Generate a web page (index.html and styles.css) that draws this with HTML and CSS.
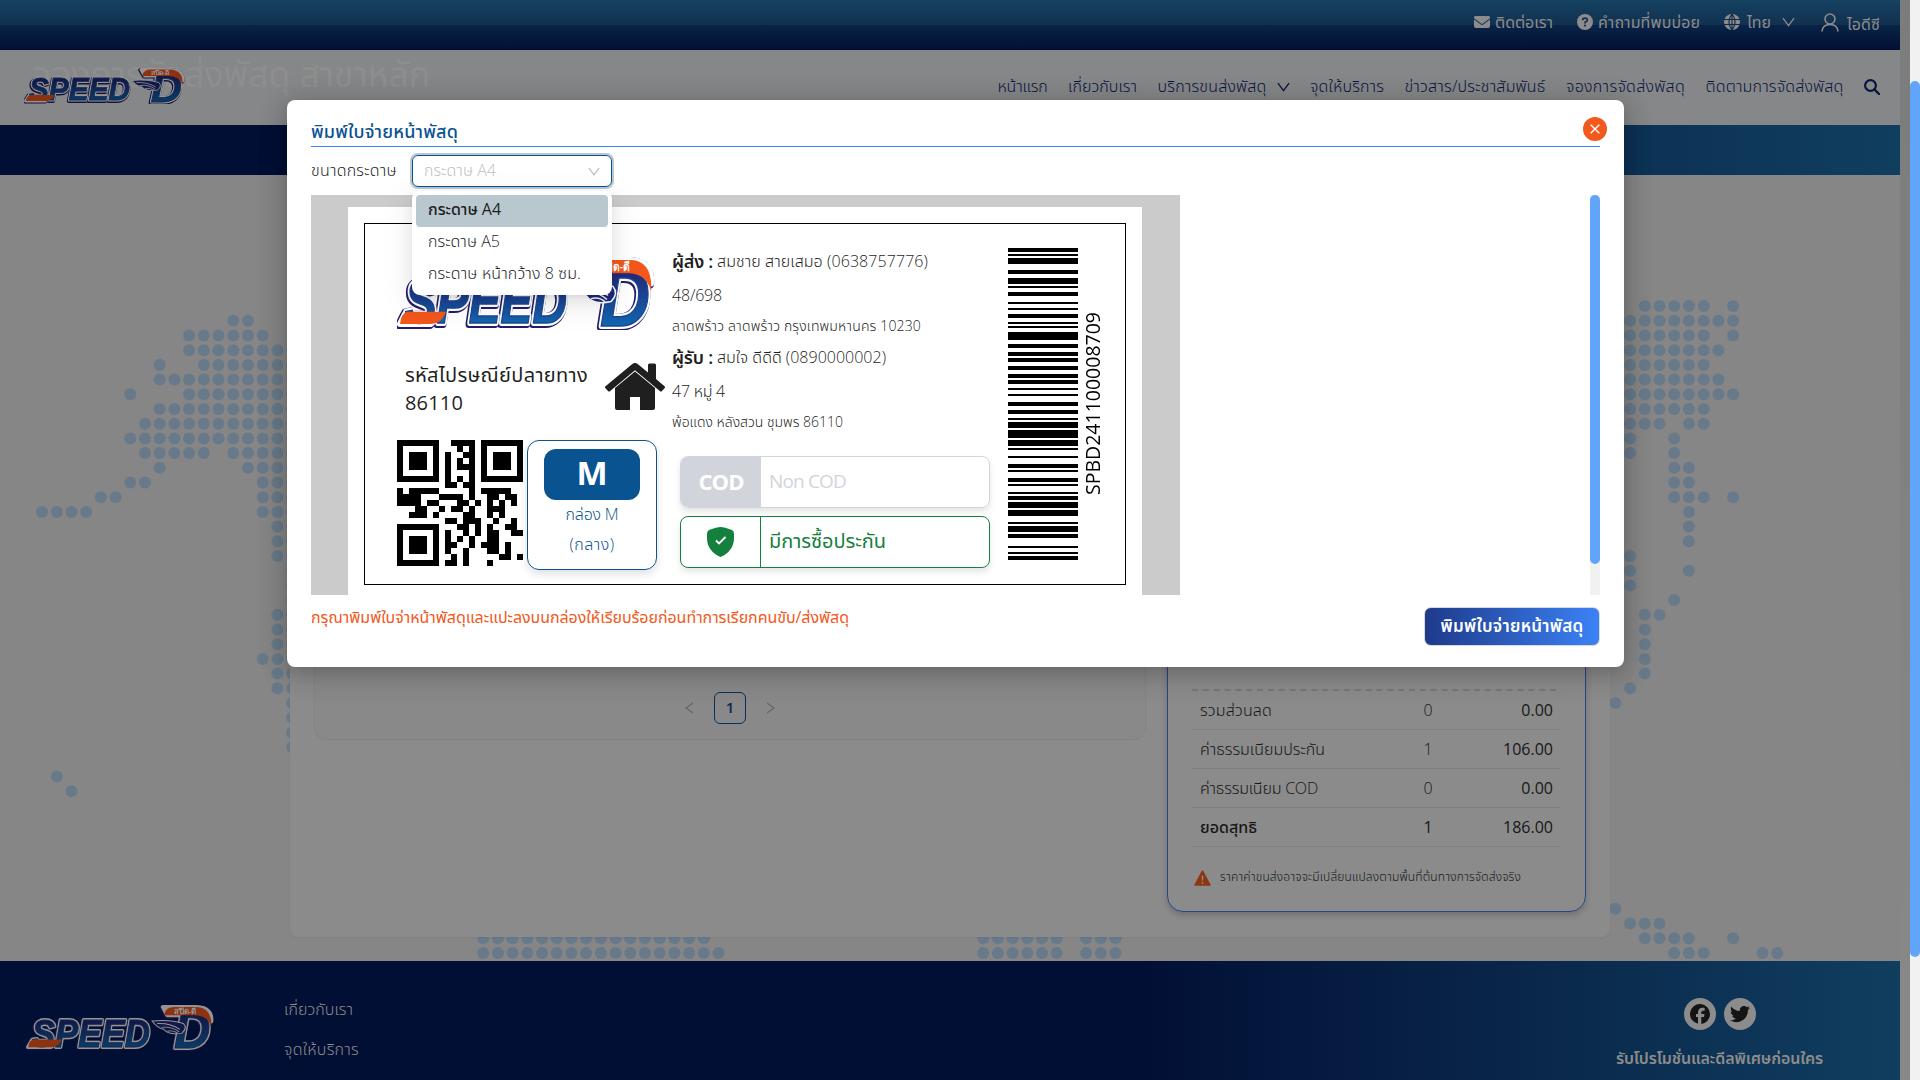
FILE: index.html
```html
<!DOCTYPE html>
<html lang="th">
<head>
<meta charset="utf-8">
<title>SPEED-D</title>
<link rel="stylesheet" href="styles.css">
</head>
<body>
<svg class="defs" aria-hidden="true">
  <defs>
    <linearGradient id="letters" x1="0" y1="0" x2="0" y2="1"><stop offset="0.25" stop-color="#1f2a7c"/><stop offset="0.95" stop-color="#0f74bd"/></linearGradient>
    <symbol id="logo" viewBox="0 0 258 72" preserveAspectRatio="none">
      <g class="logo-word">
        <g class="logo-edge"><text x="8" y="65" textLength="162" lengthAdjust="spacingAndGlyphs">SPEED</text><text class="logo-d" x="203" y="68" textLength="50" lengthAdjust="spacingAndGlyphs">D</text><path d="M8 56H44L34 66H3ZM188 3H234Q256 4 254 26L244 22Q240 16 230 16H194Z"/></g>
        <g class="logo-rim"><text x="8" y="65" textLength="162" lengthAdjust="spacingAndGlyphs">SPEED</text><text class="logo-d" x="203" y="68" textLength="50" lengthAdjust="spacingAndGlyphs">D</text><path d="M8 56H44L34 66H3ZM188 3H234Q256 4 254 26L244 22Q240 16 230 16H194Z"/></g>
        <g class="logo-fill"><text x="8" y="65" textLength="162" lengthAdjust="spacingAndGlyphs">SPEED</text><text class="logo-d" x="203" y="68" textLength="50" lengthAdjust="spacingAndGlyphs">D</text></g>
      </g>
      <path fill="#f2571b" d="M10 54H49Q45 66 34 66H3Q4 56 10 54ZM190 14Q192 3 203 3H234Q256 4 254 34Q250 17 232 16H190Z"/>
      <path fill="#1f2a7c" stroke="#fff" stroke-width="1.5" d="M173 25Q198 22 216 29Q222 36 214 44Q196 48 189 38Q180 36 173 25Z"/>
      <path fill="none" stroke="#fff" stroke-width="1.4" d="M180 29Q198 28 211 38M186 35Q200 33 210 42M194 41Q202 39 208 44"/>
      <text class="logo-tag" x="203" y="14" textLength="30" lengthAdjust="spacingAndGlyphs">สปีด-ดี</text>
    </symbol>
    <symbol id="chev" viewBox="0 0 14 10"><path d="M1 .8 7 9 13 .8" fill="none" stroke="currentColor" stroke-width="1.4"/></symbol>
  </defs>
</svg>
<div class="app">
  <div class="page">
    <div class="topbar">
      <a class="tlink"><svg width="16" height="12" viewBox="0 0 16 12"><path fill="currentColor" d="M1.5 0h13A1.5 1.5 0 0 1 15.4 2.7L8.6 7.8a1 1 0 0 1-1.2 0L.6 2.7A1.5 1.5 0 0 1 1.5 0ZM0 3.5l6.8 5.1a2 2 0 0 0 2.4 0L16 3.500V10a2 2 0 0 1-2 2H2a2 2 0 0 1-2-2Z"/></svg><span data-w="58">ติดต่อเรา</span></a>
      <a class="tlink gap-24"><svg width="16" height="16" viewBox="0 0 16 16"><circle cx="8" cy="8" r="8" fill="currentColor"/><path d="M5.600 6.200Q5.700 4.200 8 4.200T10.400 6.200Q10.400 7.300 8 8.300V9.400" fill="none" stroke="#10304f" stroke-width="1.700"/><circle cx="8" cy="11.600" r="1.100" fill="#10304f"/></svg><span data-w="102">คำถามที่พบบ่อย</span></a>
      <a class="tlink gap-24 g7"><svg width="16" height="16" viewBox="0 0 16 16"><circle cx="8" cy="8" r="8" fill="currentColor"/><path d="M0 5.500H16M0 10.500H16M8 0V16M8 0Q1.800 8 8 16M8 0Q14.200 8 8 16" fill="none" stroke="#0d2a4b" stroke-width="1.100"/></svg><span data-w="24">ไทย</span></a>
      <svg class="gap-11" width="13" height="10"><use href="#chev"/></svg>
      <a class="tlink user"><svg width="18" height="19" viewBox="0 0 18 19"><g fill="none" stroke="currentColor" stroke-width="1.600"><circle cx="9" cy="6" r="5"/><path d="M1 18.500Q1.500 11.500 9 11.500T17 18.500"/></g></svg><span class="low" data-w="33">ไอดีซี</span></a>
    </div>
    <div class="nav">
      <span class="hero" data-w="398">จองการจัดส่งพัสดุ สาขาหลัก</span>
      <svg class="logo logo-nav"><use href="#logo"/></svg>
      <nav class="menu">
        <a data-w="50">หน้าแรก</a><a data-w="69">เกี่ยวกับเรา</a><span class="sub"><a data-w="109">บริการขนส่งพัสดุ</a><svg width="13" height="10"><use href="#chev"/></svg></span><a data-w="74">จุดให้บริการ</a><a data-w="141">ข่าวสาร/ประชาสัมพันธ์</a><a data-w="119">จองการจัดส่งพัสดุ</a><a data-w="138">ติดตามการจัดส่งพัสดุ</a><svg width="16" height="16" viewBox="0 0 16 16"><circle cx="6.500" cy="6.500" r="5.400" fill="none" stroke="currentColor" stroke-width="2.200"/><path d="M10.500 10.500 15 15" stroke="currentColor" stroke-width="2.400" stroke-linecap="round"/></svg>
      </nav>
    </div>
    <div class="band"></div>
    <main class="content">
      <svg class="map" id="map"></svg>
      <section class="sheet">
        <div class="list">
          <div class="pager"><svg width="9" height="12" viewBox="0 0 9 12"><path d="M8 1 1 6 8 11" fill="none" stroke="#666" stroke-width="1.200"/></svg><span class="current">1</span><svg width="9" height="12" viewBox="0 0 9 12"><path d="M1 1 8 6 1 11" fill="none" stroke="#666" stroke-width="1.200"/></svg></div>
        </div>
        <div class="summary">
          <svg class="dash" width="369" height="2"><path d="M0 1H369" stroke="#777" stroke-width="2" stroke-dasharray="6 4.850"/></svg>
          <div class="row"><span><b data-w="72">รวมส่วนลด</b></span><i>0</i><em>0.00</em></div>
          <div class="row"><span><b data-w="125">ค่าธรรมเนียมประกัน</b></span><i>1</i><em>106.00</em></div>
          <div class="row"><span><b data-w="118">ค่าธรรมเนียม COD</b></span><i>0</i><em>0.00</em></div>
          <div class="row total"><span><b data-w="57">ยอดสุทธิ</b></span><i>1</i><em>186.00</em></div>
          <div class="note"><svg width="17" height="16" viewBox="0 0 17 16"><path d="M8.500 1 16 15H1Z" fill="#8d3610" stroke="#8d3610" stroke-width="1.500" stroke-linejoin="round"/><path d="M8.500 5.500v5M8.500 12v1.800" stroke="#8c8c8c" stroke-width="1.500"/></svg><span data-w="301">ราคาค่าขนส่งอาจจะมีเปลี่ยนแปลงตามพื้นที่ต้นทางการจัดส่งจริง</span></div>
        </div>
      </section>
    </main>
    <footer class="footer">
      <svg class="logo logo-foot"><use href="#logo"/></svg>
      <div class="flinks"><a data-w="69">เกี่ยวกับเรา</a><a data-w="75">จุดให้บริการ</a></div>
      <div class="social">
        <div class="icons">
          <span><svg width="20" height="20" viewBox="0 0 20 20"><path fill="#141414" d="M20 10a10 10 0 1 0-12 9.800V13H6V10h2V8.500c0-3.300 1.500-4.800 4.700-4.800.6 0 1.600.1 2 .2v2.800h-1.200c-1.600 0-2.200.6-2.200 2.200V10h3.200l-.55 3h-2.650v7A10 10 0 0 0 20 10Z"/></svg></span>
          <span><svg width="20" height="20" viewBox="0 0 512 512"><path fill="#141414" d="M459 152c.3 4.500.3 9.100.3 13.600C459.300 304 354 464 161.100 464 101.700 464 46.800 446.800 0 417c8.400 1 16.600 1.300 25.300 1.300 48.700 0 93.900-16.600 130.300-44.800-46.100-1-84.800-31.200-98.100-72.800 6.500 1 13 1.600 19.800 1.600 9.400 0 18.800-1.300 27.600-3.600C56.900 289 20.800 246.800 20.800 195.600v-1.300c13.900 7.800 30.200 12.700 47.400 13.300-28.300-18.800-46.800-51-46.800-87.400 0-19.500 5.200-37.400 14.300-53C87.400 131 165 172.900 252.100 177.400c-1.600-7.800-2.600-15.900-2.600-24C249.500 95.100 296.600 48 354.800 48c30.200 0 57.500 12.700 76.700 33.100 23.700-4.500 46.500-13.300 66.600-25.300-7.800 24.400-24.400 44.800-46.100 57.800 21.100-2.300 41.600-8.100 60.400-16.200-14.300 20.800-32.200 39.300-52.600 54.300Z"/></svg></span>
        </div>
        <strong data-w="207">รับโปรโมชั่นและดีลพิเศษก่อนใคร</strong>
      </div>
    </footer>
  </div>
  <div class="gutter"></div>
  <div class="vscroll"><div class="thumb"></div></div>
</div>

<div class="modal">
  <button class="close"><svg width="10" height="10" viewBox="0 0 10 10"><path d="M.7.700 9.300 9.300M9.300.700.700 9.300" stroke="#fff" stroke-width="1.400"/></svg></button>
  <h2 class="title"><span data-w="147">พิมพ์ใบจ่ายหน้าพัสดุ</span></h2>
  <div class="field">
    <label data-w="86">ขนาดกระดาษ</label>
    <div class="select"><span data-w="72">กระดาษ A4</span><svg width="12" height="9"><use href="#chev"/></svg>
      <ul class="options">
        <li class="active"><span data-w="73">กระดาษ A4</span></li>
        <li><span data-w="72">กระดาษ A5</span></li>
        <li><span data-w="153">กระดาษ หน้ากว้าง 8 ซม.</span></li>
      </ul>
    </div>
  </div>
  <div class="viewer">
    <div class="desk"><div class="paper"><div class="label">
      <div class="left">
        <svg class="logo logo-label"><use href="#logo"/></svg>
        <div class="dest"><div class="zip"><div><span data-w="183">รหัสไปรษณีย์ปลายทาง</span></div><div><span data-w="58">86110</span></div></div>
          <svg width="60" height="48" viewBox="0 0 60 48"><g fill="#1f1f1f"><path d="M30 8.500 50 25V45q0 2-2 2H35V34H25V47H12q-2 0-2-2V25Z"/><path d="M30 0q1.500 0 3 1.300L43 9.500V2q0-1.500 1.500-1.500H49.500Q51 .5 51 2V16L59.500 23.200q1 1 0 2L57 28q-1 1-2.200 0L30 7.300 5.200 28Q4 29 3 28L.5 25.200q-1-1 0-2L27 1.300Q28.500 0 30 0Z"/></g></svg></div>
        <div class="codes"><svg id="qr" width="126" height="126" viewBox="0 0 21 21" shape-rendering="crispEdges"></svg>
          <div class="size"><div class="badge">M</div><div><span data-w="53">กล่อง M</span></div><div><span data-w="45">(กลาง)</span></div></div></div>
      </div>
      <div class="right">
        <div class="addr">
          <p><b data-w="41">ผู้ส่ง :</b><span data-w="211">สมชาย สายเสมอ (0638757776)</span></p>
          <p class="l2"><span data-w="50">48/698</span></p>
          <p class="sm"><span data-w="249">ลาดพร้าว ลาดพร้าว กรุงเทพมหานคร 10230</span></p>
          <p><b data-w="41">ผู้รับ :</b><span data-w="169">สมใจ ดีดีดี (0890000002)</span></p>
          <p class="l2"><span data-w="53">47 หมู่ 4</span></p>
          <p class="sm"><span data-w="171">พ้อแดง หลังสวน ชุมพร 86110</span></p>
        </div>
        <div class="pill cod"><b><span data-w="45">COD</span></b><span data-w="77">Non COD</span></div>
        <div class="pill ins"><b><svg width="27" height="30" viewBox="0 0 27 30"><path fill="#15803d" d="M13.500 0Q17 0 25 3 27 4 27 7V11Q27 24 13.500 30 0 24 0 11V7Q0 4 2 3 10 0 13.500 0Z"/><path d="M9 13.500 12 16.500 18.500 10" fill="none" stroke="#fff" stroke-width="1.800"/></svg></b><span data-w="117">มีการซื้อประกัน</span></div>
      </div>
      <svg id="bars" width="70" height="312" viewBox="0 0 70 156" preserveAspectRatio="none" shape-rendering="crispEdges"></svg>
      <div class="serial"><span>SPBD241100008709</span></div>
    </div></div></div>
    <div class="rail"><div class="thumb"></div></div>
  </div>
  <div class="foot"><p><span data-w="538">กรุณาพิมพ์ใบจ่าหน้าพัสดุและแปะลงบนกล่องให้เรียบร้อยก่อนทำการเรียกคนขับ/ส่งพัสดุ</span></p><button class="print"><span data-w="143">พิมพ์ใบจ่ายหน้าพัสดุ</span></button></div>
</div>
<script src="script.js"></script>
</body>
</html>
```
FILE: styles.css
```css
* { box-sizing: border-box; }
body { margin: 0; width: 1920px; height: 1080px; overflow: hidden; position: relative; font: 340 16px/24px "Open Sans", "Noto Sans Thai", sans-serif; color: #1f1f1f; }
h2, p, ul { margin: 0; padding: 0; }
ul { list-style: none; }
button { border: 0; padding: 0; font: inherit; }
svg { flex: none; display: block; }
[data-w] { white-space: nowrap; display: inline-block; position: relative; top: -1px; }
.defs { position: absolute; width: 0; height: 0; }

.logo-word { font: italic 900 62px "Liberation Sans", sans-serif; }
.logo-word .logo-d { font-size: 82px; }
.logo-edge { fill: #241d6b; stroke: #241d6b; stroke-width: 8; stroke-linejoin: round; transform: translate(-1px, 1px); }
.logo-rim { fill: #fff; stroke: #fff; stroke-width: 6; stroke-linejoin: round; }
.logo-fill { fill: url(#letters); stroke: #1c4690; stroke-width: 1.5; }
.logo-tag { font: 600 12px "Open Sans", sans-serif; fill: #fff; }

.app { display: flex; height: 1080px; }
.page { width: 1900px; display: flex; flex-direction: column; background: #868686; }
.gutter { width: 10px; background: linear-gradient(#7b7d7c, #7d807f 30%, #858684 70%, #888); }
.vscroll { width: 10px; background: #f1f1f1; padding-top: 81px; }
.thumb { background: #60a5fa; border-radius: 5px; }
.vscroll .thumb { height: 876px; }

.topbar { height: 50px; flex: none; padding: 0 20px 6px 0; display: flex; align-items: center; justify-content: flex-end; color: #8c8c8c; background: linear-gradient(#154261, #12304f 50%, #082447 50%, #030f34); }
.tlink { display: flex; align-items: center; gap: 5px; }
.topbar [data-w] { top: 0; font-weight: 400; }
.gap-24 { margin-left: 24px; }
.g7 { gap: 7px; }
.gap-11 { margin-left: 11px; }
.user { margin-left: 26px; gap: 8px; }
.topbar .low { top: 2px; }
.nav { height: 75px; flex: none; position: relative; display: flex; align-items: center; justify-content: space-between; padding: 0 20px 2px 24px; background: #868788; }
.nav .hero { position: absolute; left: 32px; top: -3px; font-size: 36px; line-height: 54px; font-weight: 400; color: #8e8e8f; }
.logo-nav { width: 161px; height: 36px; position: relative; top: -1px; filter: brightness(.58); }
.menu { display: flex; align-items: center; gap: 20.500px; color: #08153f; }
.sub { display: flex; align-items: center; gap: 10px; }
.band { height: 50px; flex: none; background: linear-gradient(90deg, #020f35 45%, #103e5f); }
.content { height: 786px; flex: none; position: relative; padding-left: 290px; }
.map { position: absolute; left: 0; top: 0; width: 1900px; height: 786px; }
.sheet { position: relative; width: 1320px; height: 762px; background: #8b8b8b; border-radius: 0 0 8px 8px; display: flex; padding-left: 24px; gap: 21px; box-shadow: 0 1px 2px rgba(0,0,0,.05); }
.list { width: 832px; height: 565px; border: 1px solid #838383; border-radius: 0 0 12px 12px; background: #898989; display: flex; flex-direction: column; justify-content: flex-end; padding-bottom: 15px; }
.pager { display: flex; justify-content: center; align-items: center; gap: 20px; }
.current { width: 32px; height: 32px; border: 1px solid #07305a; border-radius: 6px; line-height: 28px; text-align: center; font-weight: 600; color: #06294c; font-size: 15px; }
.summary { width: 419px; height: 737px; border: 1px solid #23488a; border-radius: 0 0 16px 16px; padding: 513px 24px 0; box-shadow: 0 3px 6px rgba(0,0,0,.2); }
.row { height: 39px; border-bottom: 1px solid #808080; display: grid; grid-template-columns: 203px 50px 1fr; align-items: center; padding: 0 8px; color: #171717; }
.row b { font-weight: 340; top: 0; }
.row i, .row em { font-style: normal; text-align: center; }
.row em { text-align: right; font-weight: 500; }
.row.total, .row.total b { font-weight: 500; }
.note { display: flex; align-items: center; gap: 9px; padding-left: 2px; margin-top: 19px; font-size: 12px; color: #171717; }
.footer { flex: 1; display: flex; padding-left: 26px; background: linear-gradient(90deg, #020f35 60%, #103e5f); color: #8c8c8c; }
.logo-foot { width: 188px; height: 46px; margin-top: 44px; filter: brightness(.58); }
.flinks { margin-left: 70px; width: 1200px; padding-top: 37px; display: flex; flex-direction: column; gap: 16px; align-items: flex-start; }
.social { margin-left: auto; padding: 37px 77px 0 0; display: flex; flex-direction: column; align-items: center; }
.icons { display: flex; gap: 8px; margin-bottom: 16px; }
.icons span { width: 32px; height: 32px; border-radius: 50%; background: #8c8c8c; display: grid; place-items: center; }
.social strong { font-weight: 600; top: 0; }

.modal { position: absolute; left: 287px; top: 100px; width: 1337px; height: 567px; background: #fff; border-radius: 8px; padding: 19px 24px 0; box-shadow: 0 6px 16px rgba(0,0,0,.08), 0 9px 28px 8px rgba(0,0,0,.05), 0 3px 30px rgba(0,0,0,.18); }
.close { position: absolute; right: 17px; top: 17px; width: 24px; height: 24px; border-radius: 50%; background: #f2591d; display: grid; place-items: center; }
.title { height: 28px; width: 1289px; border-bottom: 1px solid #3b82f6; font-size: 18px; line-height: 26px; font-weight: 500; color: #0a5391; }
.field { display: flex; align-items: center; height: 48px; gap: 15px; }
.select { position: relative; width: 200px; height: 32px; border: 1px solid #0a5391; border-radius: 6px; box-shadow: 0 0 0 2px #b9c8cf; display: flex; align-items: center; justify-content: space-between; padding: 0 11px; color: #bfbfbf; }
.options { position: absolute; z-index: 2; left: -1px; top: 35px; width: 200px; padding: 4px; background: #fff; border-radius: 8px; color: #1f1f1f; box-shadow: 0 6px 16px rgba(0,0,0,.08), 0 3px 6px -4px rgba(0,0,0,.12), 0 9px 28px 8px rgba(0,0,0,.05); }
.options li { height: 32px; padding: 0 12px; line-height: 30px; border-radius: 4px; }
.options .active { background: #b9c8cf; font-weight: 500; }
.viewer { height: 400px; width: 1289px; display: flex; justify-content: space-between; }
.desk { width: 869px; background: #cbcbcb; padding: 12px 38px 0 37px; }
.paper { height: 388px; background: #fff; padding: 16px 16px 0; }
.label { height: 362px; border: 1px solid #000; display: flex; padding-left: 32px; }
.rail { width: 10px; background: #f1f1f1; }
.rail .thumb { height: 369px; }
.left { width: 260px; padding-top: 33px; }
.logo-label { width: 258px; height: 73px; }
.dest { margin-top: 29px; display: flex; justify-content: space-between; align-items: center; width: 268px; padding-left: 8px; }
.zip { font-size: 20px; line-height: 28px; font-weight: 400; position: relative; top: 3px; }
.codes { margin-top: 25px; display: flex; gap: 4px; }
.size { width: 130px; height: 130px; border: 1px solid #0a5391; border-radius: 12px; padding-top: 8px; text-align: center; line-height: 30px; color: #0a5391; box-shadow: 0 4px 8px rgba(0,0,0,.12); }
.badge { width: 96px; height: 51px; margin: 0 auto 0 16px; border-radius: 12px; background: #0a5391; color: #fff; font-size: 33px; font-weight: 700; line-height: 48px; }
.right { margin-left: 16px; width: 317px; padding-top: 22px; }
.addr p { height: 33px; line-height: 33px; display: flex; gap: 4px; }
.addr b { font-size: 18px; font-weight: 600; left: -1px; }
.addr .l2 { height: 34px; line-height: 34px; }
.addr .sm { height: 29px; line-height: 27px; font-size: 14px; }
.addr span { left: -1px; }
.addr { height: 210px; }
.pill { margin-left: 7px; width: 310px; height: 52px; border: 1px solid #d1d5db; border-radius: 8px; overflow: hidden; display: flex; align-items: center; font-size: 19px; font-weight: 400; color: #d1d5db; box-shadow: 0 4px 6px rgba(0,0,0,.1); }
.pill b { width: 80px; height: 52px; display: grid; place-items: center; margin-right: 8px; flex: none; }
.cod b { background: #d1d5db; color: #fff; font-size: 22px; font-weight: 700; }
.ins { margin-top: 8px; border-color: #15803d; color: #15803d; font-size: 20px; }
.ins b { border-right: 1px solid #15803d; }
#bars { margin: 24px 0 0 18px; }
.serial { width: 30px; height: 183px; margin: 88px 0 0; display: flex; align-items: center; }
.serial span { writing-mode: vertical-rl; transform: rotate(180deg); font: 400 19.5px/30px "Open Sans", sans-serif; color: #000; }
.foot { display: flex; justify-content: space-between; padding-top: 12px; width: 1289px; }
.foot p { color: #f2591d; line-height: 22px; font-weight: 400; }
.print { width: 176px; height: 39px; border: 1px solid #d9d9d9; border-radius: 7px; background: linear-gradient(90deg, #1e3a8a, #3b82f6); color: #fff; font-size: 17px; font-weight: 600; line-height: 34px; }
```
FILE: script.js
```js
// Each entry: row number, then column ranges of the dotted world map.
const dots = {
  '-1': '109-113,115', 0: '13-14,108-115', 1: '10-15,108-113,115', 2: '10-17,108-114', 3: '8,11-17,108-113',
  4: '8-17,108-114', 5: '6,10-17,108-115', 6: '8-17,108-113', 7: '7-17,108-110,112-113', 8: '6-17,108,111',
  9: '7-11,13-17,108,111', 10: '8,14-17,111-112', 11: '6-7,15-17,111-112', 12: '4-5,15-17,111-113,115',
  13: '0-3,15-17,112', 14: '16-17,112', 15: '16-17,112', 16: '16-17,108', 17: '17,108,112', 18: '17,108', 19: '17,111',
  20: '16-17,109-110', 21: '16-17,109', 22: '16-17,109', 23: '15-17,109', 24: '16-17,109', 25: '16-17,108',
  26: '17,107', 27: '17', 28: '17', 29: '17', 31: '1', 32: '2', 40: '107', 41: '108-110',
  42: '30-45,64-69,71-73,109-112,115', 43: '30-46,64-69,71-73,111-113,117-118'
};
let dotMarkup = '';
for (const row in dots) {
  for (const part of dots[row].split(',')) {
    const [a, b = a] = part.split('-').map(Number);
    for (let c = a; c <= b; c++) {
      dotMarkup += `<circle cx="${(42.1 + c * 14.704).toFixed(1)}" cy="${(145.800 + row * 14.7).toFixed(1)}" r="6"/>`;
    }
  }
}
// Row -1 is keyed as a string, so its column list is split the same way.
document.getElementById('map').innerHTML = `<g fill="#687a8a">${dotMarkup}</g>`;

// Barcode bars as start-end modules, top to bottom.
const bars = '0-2,3-4,5-8,11-13,15-18,19-20,22-24,27-28,30-31,33-35,37-38,39-40,42-46,48-50,52-54,55-57,59-61,63-65,66-68,70-71,73-74,77-79,81-83,85-86,87-90,91-95,96-99,100-101,104-105,108-110,111-112,115-117,118-119,122-123,124-126,127-130,131-134,137-138,139-142,143-145,149-150,152-153,154-156';
document.getElementById('bars').innerHTML = bars.split(',').map(s => {
  const [a, b] = s.split('-');
  return `<rect x="0" y="${a}" width="70" height="${b - a}"/>`;
}).join('');

// QR modules, one string per row.
const qr = [
  '111111100111101111111',
  '100000100010101000001',
  '101110101001101011101',
  '101110101010101011101',
  '101110101011101011101',
  '100000101000101000001',
  '111111101010101111111',
  '000000001101100000000',
  '101111100000101111100',
  '111100011110100110110',
  '111101100011010101010',
  '000110010110100111000',
  '001110100001100101000',
  '000000001101110010010',
  '111111100011010100110',
  '100000101001010110011',
  '101110101010100110000',
  '101110101100101110100',
  '101110101001000110100',
  '100000100101000001101',
  '111111101101000100000'
];
document.getElementById('qr').innerHTML = qr.map((r, y) =>
  [...r].map((v, x) => v === '1' ? `<rect x="${x}" y="${y}" width="1" height="1"/>` : '').join('')).join('');

document.querySelectorAll('[data-w]').forEach(el => {
  const natural = el.getBoundingClientRect().width;
  el.style.letterSpacing = '1px';
  const gaps = el.getBoundingClientRect().width - natural;
  el.style.letterSpacing = gaps > 0 ? (el.dataset.w - natural) / gaps + 'px' : '0';
});
```
